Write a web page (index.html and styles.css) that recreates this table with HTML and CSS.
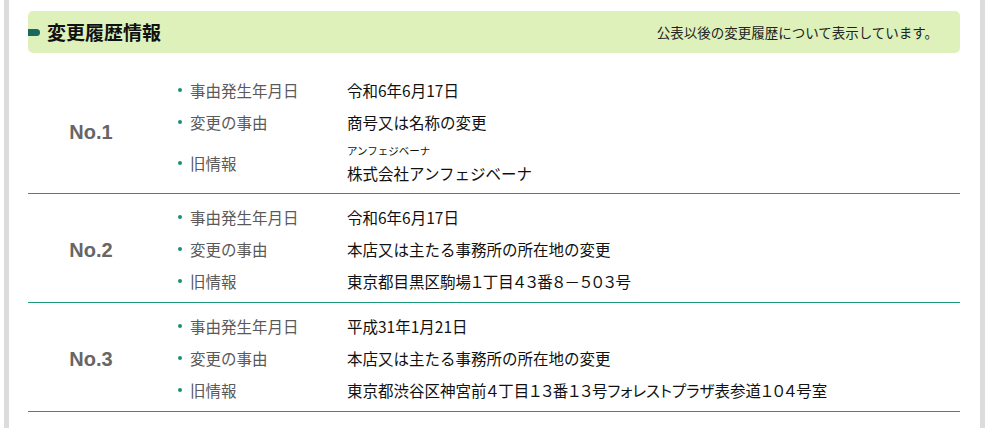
FILE: index.html
```html
<!DOCTYPE html>
<html lang="ja">
<head>
<meta charset="utf-8">
<title>変更履歴情報</title>
<link rel="stylesheet" href="styles.css">
</head>
<body>
<div class="page">
  <div class="head">
    <h2 class="title"><span class="marker"></span>変更履歴情報</h2>
    <p class="note">公表以後の変更履歴について表示しています。</p>
  </div>
  <div class="history">
    <div class="row">
      <div class="no">No.1</div>
      <ul class="items">
        <li class="item"><span class="dot"></span><span class="label">事由発生年月日</span><span class="value">令和6年6月17日</span></li>
        <li class="item"><span class="dot"></span><span class="label">変更の事由</span><span class="value">商号又は名称の変更</span></li>
        <li class="item tall"><span class="dot"></span><span class="label">旧情報</span><span class="value"><span class="kana">アンフェジベーナ</span><span class="main">株式会社アンフェジベーナ</span></span></li>
      </ul>
    </div>
    <div class="row">
      <div class="no">No.2</div>
      <ul class="items">
        <li class="item"><span class="dot"></span><span class="label">事由発生年月日</span><span class="value">令和6年6月17日</span></li>
        <li class="item"><span class="dot"></span><span class="label">変更の事由</span><span class="value">本店又は主たる事務所の所在地の変更</span></li>
        <li class="item"><span class="dot"></span><span class="label">旧情報</span><span class="value addr">東京都目黒区駒場１丁目４３番８－５０３号</span></li>
      </ul>
    </div>
    <div class="row">
      <div class="no">No.3</div>
      <ul class="items">
        <li class="item"><span class="dot"></span><span class="label">事由発生年月日</span><span class="value">平成31年1月21日</span></li>
        <li class="item"><span class="dot"></span><span class="label">変更の事由</span><span class="value">本店又は主たる事務所の所在地の変更</span></li>
        <li class="item"><span class="dot"></span><span class="label">旧情報</span><span class="value addr">東京都渋谷区神宮前４丁目１３番１３号フォレストプラザ表参道１０４号室</span></li>
      </ul>
    </div>
  </div>
</div>
</body>
</html>
```
FILE: styles.css
```css
html, body {
  margin: 0;
  padding: 0;
  background: #fff;
}
body {
  font-family: "Noto Sans CJK JP", "Noto Sans", sans-serif;
  color: #111;
}
.page {
  margin-left: 4px;
  width: 981px;
  min-height: 428px;
  box-sizing: border-box;
  border-left: 5px solid #dcdcdc;
  border-right: 5px solid #dcdcdc;
  padding: 11px 20px 0 19px;
}
.head {
  height: 42px;
  background: #def1ba;
  border-radius: 5px;
  display: flex;
  align-items: center;
  justify-content: space-between;
  padding-right: 22px;
}
.title {
  margin: 0;
  display: flex;
  align-items: center;
  font-size: 19px;
  font-weight: bold;
  line-height: 24px;
  color: #111;
}
.marker {
  display: block;
  width: 12px;
  height: 7px;
  background: #176a5c;
  border-radius: 0 4px 4px 0;
  margin-right: 7px;
}
.note {
  margin: 0;
  font-size: 13.5px;
  line-height: 20px;
  color: #222;
}
.history {
  margin-top: 14px;
}
.row {
  display: flex;
  align-items: center;
  border-bottom: 1px solid #1a9a78;
}
.no {
  width: 126px;
  text-align: center;
  font-family: "Liberation Sans", Arial, sans-serif;
  font-weight: bold;
  font-size: 20px;
  line-height: 24px;
  color: #666;
  padding-top: 3px;
}
.items {
  list-style: none;
  margin: 0;
  padding: 7px 0 5px;
  flex: 1;
}
.item {
  display: flex;
  align-items: center;
  height: 32px;
  padding-left: 24px;
  font-size: 15.5px;
  line-height: 22px;
}
.item.tall {
  height: 50px;
}
.dot {
  width: 4px;
  height: 4px;
  border-radius: 50%;
  background: #1a9070;
  margin-right: 8px;
}
.label {
  width: 157px;
  color: #5a5a5a;
}
.value {
  color: #111;
  display: flex;
  flex-direction: column;
}
.value.addr {
  font-feature-settings: "palt";
}
.kana {
  font-size: 10.5px;
  line-height: 14px;
  padding-top: 5px;
}
.main {
  line-height: 30px;
}
```
